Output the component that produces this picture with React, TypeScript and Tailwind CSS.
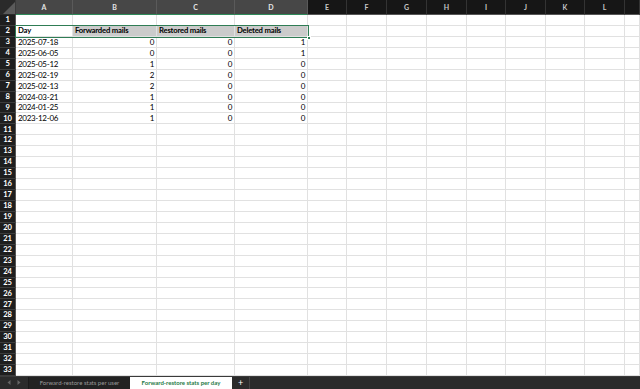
import React from "react";

const cols = [
  { l: "A", w: 57, sel: true },
  { l: "B", w: 84, sel: true },
  { l: "C", w: 78, sel: true },
  { l: "D", w: 73, sel: true },
  { l: "E", w: 39 },
  { l: "F", w: 40 },
  { l: "G", w: 40 },
  { l: "H", w: 40 },
  { l: "I", w: 39 },
  { l: "J", w: 40 },
  { l: "K", w: 39 },
  { l: "L", w: 40 },
  { l: "", w: 15 },
];

const data: (string | number)[][] = [
  ["2025-07-18", 0, 0, 1],
  ["2025-06-05", 0, 0, 1],
  ["2025-05-12", 1, 0, 0],
  ["2025-02-19", 2, 0, 0],
  ["2025-02-13", 2, 0, 0],
  ["2024-03-21", 1, 0, 0],
  ["2024-01-25", 1, 0, 0],
  ["2023-12-06", 1, 0, 0],
];

const font = { fontFamily: "Lato, 'Liberation Sans', sans-serif" };

function Cell({ w, children, cls }: { w: number; children?: React.ReactNode; cls?: string }) {
  return (
    <div
      className={"shrink-0 h-full border-r border-b border-[#e1e1e1] flex items-end overflow-hidden whitespace-nowrap leading-none pb-[1px] " + (cls || "")}
      style={{ width: w }}
    >
      {children}
    </div>
  );
}

export default function App() {
  const rows = Array.from({ length: 33 }, (_, i) => i + 1);
  return (
    <div className="w-[640px] h-[389px] flex flex-col overflow-hidden bg-white" style={font}>
      {/* column header */}
      <div className="flex h-[15px] shrink-0">
        <div className="w-[16px] shrink-0 h-full bg-[#2a2a2a] relative border-r border-[#3a3a3a]">
          <svg width="16" height="15" className="absolute inset-0">
            <polygon points="15,2 15,14 3,14" fill="#5a5a5a" />
          </svg>
        </div>
        {cols.map((c, i) => (
          <div
            key={i}
            className={
              "shrink-0 h-full flex items-center justify-center text-[7px] font-bold border-r " +
              (c.sel
                ? "bg-[#474747] text-[#e6e6e6] border-[#5a5a5a] border-b-[1.5px] border-b-[#2f8a5a]"
                : "bg-[#161616] text-[#c8c8c8] border-[#333] border-b border-b-[#555]")
            }
            style={{ width: c.w }}
          >
            {c.l}
          </div>
        ))}
      </div>
      {/* body */}
      <div className="relative flex flex-col">
        {rows.map((r) => {
          const d = r >= 3 && r <= 10 ? data[r - 3] : null;
          return (
            <div key={r} className="flex h-[10.94px] shrink-0">
              <div className="w-[16px] shrink-0 h-full bg-[#1e1e1e] border-b border-[#3c3c3c] border-r border-r-[#555] flex items-center justify-center text-white font-bold text-[7.6px] leading-none tracking-[-0.2px]">
                {r}
              </div>
              {cols.map((c, i) => {
                let content: React.ReactNode = null;
                let cls = "";
                if (r === 2 && i < 4) {
                  content = ["Day", "Forwarded mails", "Restored mails", "Deleted mails"][i];
                  cls = "font-bold text-[7.7px] tracking-[-0.2px] text-black pl-[2px] " + (i > 0 ? "bg-[#cbcbcb]" : "");
                } else if (d && i < 4) {
                  content = d[i];
                  cls =
                    "text-[8px] tracking-[-0.3px] text-black " + (i === 0 ? "pl-[2px]" : "justify-end pr-[2px]");
                }
                return (
                  <Cell key={i} w={c.w} cls={cls}>
                    {content}
                  </Cell>
                );
              })}
            </div>
          );
        })}
        {/* selection overlay */}
        <div className="absolute left-[15px] top-[10px] w-[294px] h-[13px] border-[1.5px] border-[#2f7d55] pointer-events-none" />
        <div className="absolute left-[306.5px] top-[21px] w-[4px] h-[4px] bg-[#2f7d55] border border-white" />
      </div>
      {/* tab bar */}
      <div className="flex flex-1 bg-[#2b2b2b] border-t border-[#3a3a3a] text-[6px]">
        <div className="w-[29px] shrink-0 flex items-center justify-center gap-[6px] border-r border-[#1a1a1a]">
          <svg width="4" height="5" viewBox="0 0 4 5">
            <polygon points="3.5,0 3.5,5 0.5,2.5" fill="#666" />
          </svg>
          <svg width="4" height="5" viewBox="0 0 4 5">
            <polygon points="0.5,0 0.5,5 3.5,2.5" fill="#666" />
          </svg>
        </div>
        <div className="w-[101px] shrink-0 flex items-center justify-center text-[#9a9a9a] bg-[#222]">
          Forward-restore stats per user
        </div>
        <div className="w-[102px] shrink-0 flex items-center justify-center bg-white text-[#1e7a45] font-bold">
          Forward-restore stats per day
        </div>
        <div className="w-[18px] shrink-0 flex items-center justify-center text-white text-[9px] leading-none border-r border-[#444]">
          +
        </div>
        <div className="flex-1" />
      </div>
    </div>
  );
}
